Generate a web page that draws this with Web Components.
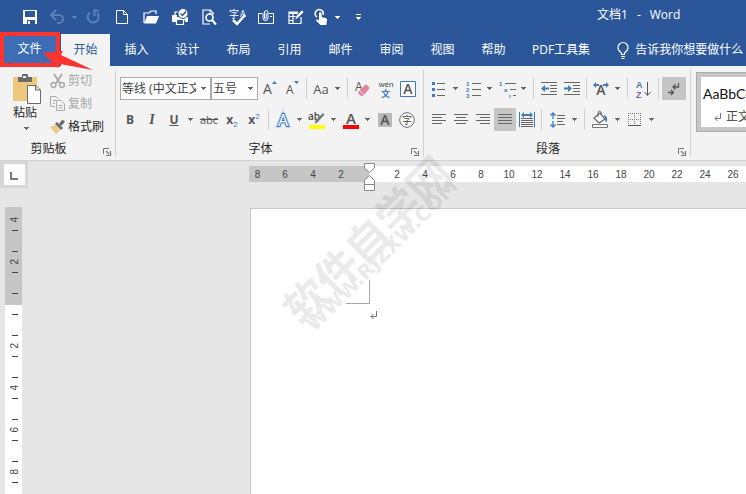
<!DOCTYPE html>
<html lang="zh-CN">
<head>
<meta charset="utf-8">
<title>文档1 - Word</title>
<style>
html, body { margin: 0; height: 100%; overflow: hidden; }
body { font: 12px/16px "Open Sans", "Noto Sans CJK SC", sans-serif; color: #262626; background: #e6e6e6; }
</style>
</head>
<body>
<word-app></word-app>
<script>
const A = 'font-family="Open Sans, Noto Sans CJK SC, sans-serif"';
const L = 'font-family="Liberation Sans, Arial, sans-serif"';
const ICONS = {
  caret: [5, 3, '<path d="M0 0h5v1H4v1H3v1H2V2H1V1H0z" fill="#666"/>'],
  caretLight: [5, 3, '<path d="M0 0h5v1H4v1H3v1H2V2H1V1H0z" fill="currentColor"/>'],
  save: [16, 16, '<path fill="#fff" fill-rule="evenodd" d="M1 1h14v14H1zM3 2v6h10V2zM5 11v4h1v-3h2v3h5v-4z"/>'],
  undo: [16, 16, '<path d="M3 6h7a4 4 0 0 1 0 8H8" fill="none" stroke="#5c7fb6" stroke-width="2"/><path d="M7 1L2 6l5 5" fill="none" stroke="#5c7fb6" stroke-width="2"/>'],
  redo: [16, 16, '<path d="M5 3.500A5.500 5.500 0 1 0 12 4" fill="none" stroke="#5c7fb6" stroke-width="2"/><path d="M8 1.500h6M9.500 2v5" fill="none" stroke="#5c7fb6" stroke-width="2"/>'],
  blank: [16, 16, '<path d="M2.500 1.500h7l4 4v9h-11zM9.500 1.500v4h4" fill="none" stroke="#fff"/>'],
  open: [16, 16, '<path d="M1 14V4h5l2-2h5v3" fill="none" stroke="#fff" stroke-width="1.200"/><path d="M1 14.500L4 7h12l-3 7.500z" fill="#fff"/>'],
  print: [18, 16, '<path d="M1 6h5v2h11v5h-3v-2H5v2H1z" fill="#fff"/><path d="M4 6V3h4M5.500 10.500h7v5h-7z" fill="#2b579a" stroke="#fff" stroke-width="1.200"/><circle cx="12" cy="4.500" r="5" fill="#fff" stroke="#2b579a"/><path d="M9.500 4.500l2 2 3.500-4" stroke="#2b579a" stroke-width="1.500" fill="none"/>'],
  preview: [16, 17, '<path d="M12 5V4L9.500 1H2v14h7" fill="none" stroke="#fff" stroke-width="1.200"/><path d="M9 1v4h4" fill="none" stroke="#fff"/><circle cx="8.500" cy="8.500" r="3.500" fill="none" stroke="#fff" stroke-width="1.700"/><path d="M11 11l4 4.500" stroke="#fff" stroke-width="2.200"/>'],
  spell: [18, 17, `<text x="0" y="9" font-size="10" fill="#fff" ${A}>字</text><text x="11" y="8" font-size="9" fill="#fff" ${A}>A</text><path d="M4 11l4 4 8-9" stroke="#fff" stroke-width="2.500" fill="none"/>`],
  mail: [17, 16, '<path d="M4 4.500H.5v10h15v-10H11M12 7.500h2" fill="none" stroke="#fff"/><path d="M5 4v5a2.500 2.500 0 0 0 5 0V3a1.800 1.800 0 0 0-3.500 0v6a.8.8 0 0 0 1.700 0V4" fill="none" stroke="#fff"/>'],
  edit: [16, 16, '<path d="M10 3H1v11.500h12V8M1 7.500h7M5 3v11M1 11.500h4" fill="none" stroke="#fff" stroke-width="1.200"/><path d="M1 3h9v2H1z" fill="#fff"/><path d="M7 11l1-4 6-6 2 2-6 6z" fill="#fff" stroke="#2b579a" stroke-width=".6"/>'],
  touch: [14, 17, '<path d="M3 8a4 4 0 1 1 6-2" fill="none" stroke="#fff" stroke-width="1.500"/><path d="M5 4.500a1.300 1.300 0 0 1 2.600 0V8l4.500 1.200q1 .4 1 1.800l-.8 5H6.500L2 11.500q0-1.500 1.500-1L5 11.500z" fill="#fff"/>'],
  customize: [5, 6, '<path d="M0 0h5v1H0zM0 3h5v1H4v1H3v1H2V5H1V4H0z" fill="#fff"/>'],
  bulb: [13, 17, '<path d="M4.500 12.500V11Q1 8.500 1 5.500a5 5 0 0 1 10 0Q11 8.500 7.500 11v1.500z" fill="none" stroke="#fff" stroke-width="1.200"/><path d="M4 14.500h4M4.500 16.500h3" stroke="#fff"/>'],
  paste: [28, 32, '<path d="M0 4h24v24H0z" fill="#edc87e"/><path d="M5 4h4V2q0-1 1-1h4q1 0 1 1v2h4v5H5z" fill="#6b6b6b"/><path d="M10 3h3v2h-3z" fill="#f3f3f3"/><path d="M14.500 12.500H23l4.500 4.500v13.500h-13zM22.500 12.500V17H27" fill="#fff" stroke="#6b6b6b"/>'],
  cut: [16, 16, '<path d="M4 1l6.500 10M12 1L5.500 11" stroke="#aaa" stroke-width="2"/><circle cx="3.500" cy="12" r="2.400" fill="none" stroke="#aaa" stroke-width="1.500"/><circle cx="12" cy="12" r="2.400" fill="none" stroke="#aaa" stroke-width="1.500"/>'],
  copy: [16, 16, '<path d="M5 10.500H.5v-10H6L8.500 3M3 4.500h3M3 7.500h2" fill="none" stroke="#aaa"/><path d="M6.500 4.500H11l3.500 3.500v6.500h-8zM8.500 9.500h4M8.500 12h4" fill="none" stroke="#aaa"/>'],
  brush: [16, 16, '<path d="M0 8l5-2 5 5-4 4z" fill="#edc87e"/><path d="M5 5l2-2 6 6-2 2z" fill="#6b6b6b"/><path d="M9 5l3-4 3 1-1 2-3 3z" fill="#6b6b6b"/>'],
  launch: [8, 8, '<path d="M.5 6V.5H6" fill="none" stroke="#777"/><path d="M3 3l3 3M7.500 3v4.500H3" fill="none" stroke="#777" stroke-width="1.200"/>'],
  grow: [16, 18, `<text x="1" y="14" font-size="14" fill="#555" ${A}>A</text><path d="M10 4h5l-2.500-3z" fill="#3f7cb8"/>`],
  shrink: [16, 18, `<text x="2" y="14" font-size="12" fill="#555" ${A}>A</text><path d="M10 1h5l-2.500 3z" fill="#3f7cb8"/>`],
  eraser: [16, 18, `<text x="0" y="11" font-size="12" fill="#555" ${A}>A</text><path d="M3 12l7-7q1-1 2 0l2 2q1 1 0 2l-6 7H6l-3-3z" fill="#e8819a"/><path d="M4 10l5 5" stroke="#f3f3f3"/>`],
  wen: [18, 20, `<text x="9" y="8" text-anchor="middle" font-size="8" fill="#444" ${L}>wén</text><text x="4" y="18" font-size="9" font-weight="700" fill="#3f7cb8" ${A}>文</text>`],
  boxA: [16, 16, `<path d="M.5.5h15v15H.5z" fill="#fff" stroke="#3f7cb8"/><text x="8" y="13" text-anchor="middle" font-size="14" font-weight="600" fill="#555" ${A}>A</text>`],
  glowA: [16, 16, `<text x="8" y="14" text-anchor="middle" font-size="16" fill="#fff" stroke="#c9dcf0" stroke-width="4" ${A}>A</text><text x="8" y="14" text-anchor="middle" font-size="16" fill="#fff" stroke="#3f7cb8" stroke-width="2" ${A}>A</text><text x="8" y="14" text-anchor="middle" font-size="16" fill="#fff" ${A}>A</text>`],
  highlight: [18, 18, `<text x="0" y="9" font-size="10" font-weight="600" fill="#444" ${A}>ab</text><path d="M15 2l1.500 1.500-7 8-3 1 1-3z" fill="#777"/><path d="M1 14h16v4H1z" fill="#ff0"/>`],
  fontColor: [16, 18, `<text x="8" y="13" text-anchor="middle" font-size="15" font-weight="600" fill="#555" ${A}>A</text><path d="M0 14h16v4H0z" fill="red"/>`],
  shadeA: [14, 14, `<path d="M0 0h14v14H0z" fill="#b9b9b9"/><text x="7" y="12" text-anchor="middle" font-size="14" font-weight="600" fill="#555" ${A}>A</text>`],
  circleZi: [16, 16, `<circle cx="8" cy="8" r="7.300" fill="#fff" stroke="#666"/><text x="8" y="12" text-anchor="middle" font-size="10" fill="#444" ${A}>字</text>`],
  bullets: [14, 16, '<path d="M5 2.500h8M5 8.500h8M5 14.500h8" stroke="#666"/><path d="M0 1h3v3H0zM0 7h3v3H0zM0 13h3v3H0z" fill="#3f7cb8"/>'],
  numbers: [15, 17, `<path d="M6 3.500h9M6 9.500h9M6 15.500h9" stroke="#666"/><g font-size="6" font-weight="700" fill="#3f7cb8" ${L}><text x="0" y="6">1</text><text x="0" y="12">2</text><text x="0" y="18">3</text></g>`],
  multi: [17, 17, `<path d="M6 3.500h11M11 9.500h6M14 15.500h3" stroke="#666"/><g font-size="6" font-weight="700" fill="#3f7cb8" ${L}><text x="0" y="6">1</text><text x="5" y="12">a</text><text x="10" y="18">i</text></g>`],
  outdent: [16, 14, '<path d="M0 .5h16M9 3.500h7M9 6.500h7M9 9.500h7M0 12.500h16" stroke="#666"/><path d="M0 6.500L4 3v2.500h4v2H4V10z" fill="#3f7cb8"/>'],
  indent: [16, 14, '<path d="M0 .5h16M9 3.500h7M9 6.500h7M9 9.500h7M0 12.500h16" stroke="#666"/><path d="M8 6.500L4 3v2.500H0v2h4V10z" fill="#3f7cb8"/>'],
  scaleA: [16, 16, `<text x="8" y="14" text-anchor="middle" font-size="14" font-weight="600" fill="#555" ${A}>A</text><path d="M0 4l3-3v2h3v2H3v2zM16 4l-3-3v2h-3v2h3v2z" fill="#3f7cb8"/>`],
  sort: [15, 18, `<text x="0" y="8" font-size="9" font-weight="700" fill="#3f7cb8" ${L}>A</text><text x="0" y="18" font-size="9" font-weight="700" fill="#9155b0" ${L}>Z</text><path d="M11.500 2v13M8.500 12l3 3.500 3-3.500" fill="none" stroke="#555"/>`],
  marks: [12, 14, '<path d="M10.500 1v4H5M7.500 2.500L5 5l2.500 2.500M0 10.500h5M3 8l2.500 2.500L3 13" fill="none" stroke="#555" stroke-width="1.300"/>'],
  left: [14, 11, '<path d="M0 .5h14M0 3.500h10M0 6.500h14M0 9.500h10" stroke="#666"/>'],
  center: [14, 11, '<path d="M0 .5h14M2 3.500h10M0 6.500h14M2 9.500h10" stroke="#666"/>'],
  right: [14, 11, '<path d="M0 .5h14M4 3.500h10M0 6.500h14M4 9.500h10" stroke="#666"/>'],
  justify: [14, 11, '<path d="M0 .5h14M0 3.500h14M0 6.500h14M0 9.500h14" stroke="#666"/>'],
  distribute: [16, 16, '<path d="M.5 0v15M15.500 0v15" stroke="#3f7cb8"/><path d="M2 3l3-3v2h6V0l3 3-3 3V4H5v2z" fill="#3f7cb8"/><path d="M2 6.500h12M2 8.500h12M2 10.500h12M2 12.500h12M2 14.500h12" stroke="#666"/>'],
  spacing: [15, 16, '<path d="M7 3.500h8M7 6.500h8M7 9.500h6M7 12.500h8" stroke="#666"/><path d="M3 7V1M.5 3.500L3 1l2.500 2.500M3 9v6M.5 12.500L3 15l2.500-2.500" fill="none" stroke="#3f7cb8" stroke-width="1.300"/>'],
  bucket: [17, 17, '<path d="M2 7l6-5 5 6-6 4z" fill="#fff" stroke="#666" stroke-width="1.200"/><path d="M6 6V1q1.500-1.500 3 0v3" fill="none" stroke="#666"/><path d="M12 4q4 1 3 7-2 0-2-3z" fill="#3f7cb8"/><path d="M.5 13.500h15v3H.5z" fill="#fff" stroke="#777"/>'],
  borders: [14, 14, '<path d="M.5 0v13M6.500 0v13M12.500 0v13M0 .5h13M0 6.500h13" stroke="#777" stroke-dasharray="1 1"/><path d="M0 12.500h13" stroke="#555"/>'],
  tabstop: [9, 9, '<path d="M1 0v7h7" fill="none" stroke="#777" stroke-width="2"/>'],
  enter: [8, 8, '<path d="M6.500 0v5.500H1M3.500 3L1 5.500 3.500 8" fill="none" stroke="#777"/>'],
  indentMarks: [12, 28, '<path d="M.5.5h10v4.500l-5 4.500-5-4.500zM.5 27.500v-10l5-5 5 5v10zM.5 21.500h10" fill="#fff" stroke="#888"/>'],
  arrow: [50, 20, '<path d="M0 2L20 0 18 4 50 19 17 13 15 17z" fill="#fb3430"/>']
};
function define(name, html, after) {
  const t = document.createElement('template');
  t.innerHTML = html;
  customElements.define(name, class extends HTMLElement {
    connectedCallback() {
      if (this.shadowRoot) return;
      const root = this.attachShadow({ mode: 'open' });
      root.append(t.content.cloneNode(true));
      if (after) after(this, root);
    }
  });
}

define('w-icon', '<style>:host{display:block;flex:none}svg{display:block;overflow:visible}</style>', (el, root) => {
  const [w, h, body] = ICONS[el.getAttribute('name')];
  root.innerHTML += `<svg width="${w}" height="${h}" viewBox="0 0 ${w} ${h}" aria-hidden="true">${body}</svg>`;
});

/* Tool button; its width comes from --w */
define('w-tool', `<style>
:host{display:block;flex:none;width:var(--w,22px)}
button{box-sizing:border-box;display:flex;align-items:center;justify-content:center;width:100%;height:23px;margin:0;padding:0;border:0;background:none;font:inherit;color:#555}
:host([wide]) button{width:24px}:host([wide]){width:24px}
:host([pressed]) button{background:#c6c6c6}
</style><button type="button"><slot></slot></button>`, (el, root) => {
  root.querySelector('button').setAttribute('aria-label', el.getAttribute('label') || el.textContent.trim());
  const i = el.getAttribute('icon');
  if (i) root.querySelector('button').innerHTML = `<w-icon name="${i}"></w-icon>`;
});
define('w-drop', `<style>:host{display:block;flex:none;width:12px}
button{display:flex;align-items:center;width:100%;height:23px;padding:0 0 0 3px;border:0;background:none}</style>
<button type="button" aria-label="更多选项"><w-icon name="caret"></w-icon></button>`);
define('w-sep', `<style>:host{display:flex;flex:none;width:7px;height:21px;justify-content:center}i{width:1px;background:#d0d0d0}</style><i></i>`);
define('w-row', `<style>:host{display:flex;align-items:center;height:23px}</style><slot></slot>`);

define('w-combo', `<style>
:host{display:grid;flex:none;align-items:center}
select{grid-area:1/1;box-sizing:border-box;appearance:none;width:100%;height:23px;margin:0;padding:0 14px 0 1px;border:1px solid #ababab;border-radius:0;background:#fff;font:inherit;color:#444;overflow:hidden;text-overflow:clip}
w-icon{grid-area:1/1;justify-self:end;margin-right:5px;pointer-events:none}
</style><select><option></option></select><w-icon name="caret"></w-icon>`, (el, root) => {
  root.querySelector('option').textContent = el.getAttribute('value');
  root.querySelector('select').setAttribute('aria-label', el.getAttribute('label'));
});

define('w-group', `<style>
:host{display:flex;flex:none;flex-direction:column;box-sizing:border-box;height:87px;border-right:1px solid #d2d2d2}
.body{flex:1}
footer{display:grid;grid-template-columns:1fr 14px;align-items:center;height:16px;padding-right:4px}
footer span{text-align:center}
button{justify-self:end;padding:0;border:0;background:none;margin-top:6px}
</style><div class="body"><slot></slot></div><footer><span></span><button type="button" aria-label="对话框启动器"><w-icon name="launch"></w-icon></button></footer>`, (el, root) => {
  root.querySelector('span').textContent = el.getAttribute('label');
});

define('w-qat', `<style>
:host{display:flex;align-items:center;height:100%;padding-left:15px;color:#fff}
w-tool{--w:29px}.n{--w:26px}.t{--w:22px}.d{--w:10px}.u{--w:8px}.c{--w:32px}.dim{color:#5c7fb6}
</style>
<w-tool icon="save" label="保存"></w-tool><w-tool class="n" icon="undo" label="撤消"></w-tool><w-tool class="u" label="撤消列表"><w-icon class="dim" name="caretLight"></w-icon></w-tool><w-tool icon="redo" label="恢复"></w-tool><w-tool icon="blank" label="新建"></w-tool><w-tool icon="open" label="打开"></w-tool><w-tool icon="print" label="快速打印"></w-tool><w-tool icon="preview" label="打印预览"></w-tool><w-tool icon="spell" label="拼写和语法"></w-tool><w-tool icon="mail" label="电子邮件"></w-tool><w-tool icon="edit" label="绘制表格"></w-tool><w-tool class="t" icon="touch" label="触摸模式"></w-tool><w-tool class="d" label="模式列表"><w-icon style="color:#fff" name="caretLight"></w-icon></w-tool><w-tool class="c" icon="customize" label="自定义快速访问工具栏"></w-tool>`);

define('w-titlebar', `<style>
:host{display:flex;align-items:center;height:34px;background:#2b579a;color:#fff}
h1{display:flex;gap:9px;margin:0 0 4px 223px;font:inherit;white-space:nowrap}
</style><w-qat></w-qat><h1><span>文档1</span><span>-</span><span>Word</span></h1>`);

define('w-tab', `<style>
:host{display:block;flex:none}
button{min-width:49px;height:32px;padding:0 12px;border:0;background:none;color:#fff;font:inherit;white-space:nowrap}
:host([file]) button{min-width:59px;padding-bottom:2px;background:#3e6db5}
:host([selected]) button{background:#f3f3f3;color:#2b579a}
</style><button type="button" role="tab"><slot></slot></button>`);
define('w-tabs', `<style>
:host{display:flex;align-items:center;gap:2px;height:32px;background:#2b579a;color:#fff}
.tell{display:flex;align-items:center;gap:5px;margin-left:13px;padding:0;border:0;background:none;color:#fff;font:inherit;white-space:nowrap}
</style><w-tab file>文件</w-tab><w-tab selected>开始</w-tab><w-tab>插入</w-tab><w-tab>设计</w-tab><w-tab>布局</w-tab><w-tab>引用</w-tab><w-tab>邮件</w-tab><w-tab>审阅</w-tab><w-tab>视图</w-tab><w-tab>帮助</w-tab><w-tab>PDF工具集</w-tab>
<button class="tell" type="button"><w-icon name="bulb"></w-icon>告诉我你想要做什么</button>`);

define('w-clipboard', `<style>
:host{display:flex;gap:9px;padding:3px 10px 0 13px}
button{padding:0;border:0;background:none;font:inherit;color:#262626}
.big{display:flex;flex-direction:column;align-items:flex-start}
.big w-icon + span{margin-bottom:6px}
.big .caret{margin-left:11px}
.list{display:flex;flex-direction:column;margin-top:-4px}
.list button{display:flex;align-items:center;gap:2px;height:23px}
.list :disabled{color:#a6a6a6}
</style><button class="big" type="button"><w-icon name="paste"></w-icon><span>粘贴</span><w-icon class="caret" name="caret"></w-icon></button>
<div class="list"><button type="button" disabled><w-icon name="cut"></w-icon>剪切</button><button type="button" disabled><w-icon name="copy"></w-icon>复制</button><button type="button"><w-icon name="brush"></w-icon>格式刷</button></div>`);

define('w-fonttools', `<style>
:host{display:flex;flex-direction:column;gap:8px;padding:7px 4px 0}
.face{width:91px}.size{width:47px;margin-right:1px}
.row2{margin-left:-1px}
b,u,.x{font-size:12px;font-weight:700}i{font-family:"Liberation Serif",serif;font-weight:700;font-size:14px}
s{font-size:11px}sup,sub{font:8px/0 "Liberation Sans",Arial,sans-serif;color:#3f7cb8}.aa{font-size:13px}
</style>
<w-row><w-combo class="face" label="字体" value="等线 (中文正文)"></w-combo><w-combo class="size" label="字号" value="五号"></w-combo><w-tool icon="grow" label="增大字号"></w-tool><w-tool icon="shrink" label="减小字号"></w-tool><w-sep></w-sep><w-tool label="更改大小写"><span class="aa">Aa</span></w-tool><w-drop></w-drop><w-sep></w-sep><w-tool wide icon="eraser" label="清除格式"></w-tool><w-tool icon="wen" label="拼音指南"></w-tool><w-tool icon="boxA" label="字符边框"></w-tool></w-row>
<w-row class="row2"><w-tool label="加粗"><b>B</b></w-tool><w-tool label="倾斜"><i>I</i></w-tool><w-tool label="下划线"><u>U</u></w-tool><w-drop></w-drop><w-tool wide label="删除线"><s>abc</s></w-tool><w-tool label="下标"><span class="x">x<sub>2</sub></span></w-tool><w-tool label="上标"><span class="x">x<sup>2</sup></span></w-tool><w-sep></w-sep><w-tool icon="glowA" label="文本效果"></w-tool><w-drop></w-drop><w-tool icon="highlight" label="突出显示"></w-tool><w-drop></w-drop><w-tool icon="fontColor" label="字体颜色"></w-tool><w-drop></w-drop><w-tool icon="shadeA" label="字符底纹"></w-tool><w-tool icon="circleZi" label="带圈字符"></w-tool></w-row>`);

define('w-paratools', `<style>:host{display:flex;flex-direction:column;gap:8px;padding:7px 4px 0}</style>
<w-row><w-tool icon="bullets" label="项目符号"></w-tool><w-drop></w-drop><w-tool icon="numbers" label="编号"></w-tool><w-drop></w-drop><w-tool icon="multi" label="多级列表"></w-tool><w-drop></w-drop><w-sep></w-sep><w-tool wide icon="outdent" label="减少缩进量"></w-tool><w-tool icon="indent" label="增加缩进量"></w-tool><w-sep></w-sep><w-tool icon="scaleA" label="中文版式"></w-tool><w-drop></w-drop><w-sep></w-sep><w-tool wide icon="sort" label="排序"></w-tool><w-sep></w-sep><w-tool wide pressed icon="marks" label="显示编辑标记"></w-tool></w-row>
<w-row><w-tool icon="left" label="左对齐"></w-tool><w-tool icon="center" label="居中"></w-tool><w-tool icon="right" label="右对齐"></w-tool><w-tool pressed icon="justify" label="两端对齐"></w-tool><w-tool icon="distribute" label="分散对齐"></w-tool><w-sep></w-sep><w-tool wide icon="spacing" label="行距"></w-tool><w-drop></w-drop><w-sep></w-sep><w-tool wide icon="bucket" label="底纹"></w-tool><w-drop></w-drop><w-tool icon="borders" label="边框"></w-tool><w-drop></w-drop></w-row>`);

define('w-styles', `<style>
:host{display:block;flex:1;min-width:0;overflow:hidden;padding:2px 0 0 5px}
button{box-sizing:border-box;display:flex;width:86px;height:60px;padding:4px;border:1px solid #ababab;background:#c6c6c6;font:inherit;color:#444}
.card{display:flex;flex:1;flex-direction:column;gap:6px;height:50px;box-sizing:border-box;padding:8px 0 0 2px;background:#fff;text-align:left}
.sample{font:14px/18px Lato,"Open Sans",sans-serif;color:#111}
.name{display:flex;align-items:center;gap:4px;padding-left:11px}
</style><button type="button"><span class="card"><span class="sample">AaBbCcDd</span><span class="name"><w-icon name="enter"></w-icon>正文</span></span></button>`);

define('w-ribbon', `<style>
:host{display:flex;height:95px;box-sizing:border-box;padding-top:4px;background:#f3f3f3;border-bottom:1px solid #d2d2d2;overflow:hidden}
.clip{width:116px}.font{width:308px}.para{width:267px}
</style><w-group class="clip" label="剪贴板"><w-clipboard></w-clipboard></w-group><w-group class="font" label="字体"><w-fonttools></w-fonttools></w-group><w-group class="para" label="段落"><w-paratools></w-paratools></w-group><w-styles></w-styles>`);

define('w-hruler', `<style>
:host{display:grid;grid-template:16px/120px 1fr;height:16px;background:#fff;font:10px/18px "Liberation Sans",Arial,sans-serif;color:#444}
.neg,.pos{display:flex;overflow:hidden}
.neg{grid-area:1/1;background:#c6c6c6;padding-left:1px}
.pos{grid-area:1/2;padding-left:14px}
span{flex:none;width:28px;text-align:center}
.neg span:first-child{width:15px;margin-right:6px}
.mark{grid-area:1/2;justify-self:start;margin:-3px 0 0 -5px}
</style><div class="neg"></div><div class="pos"></div><w-icon class="mark" name="indentMarks"></w-icon>`, (el, root) => {
  root.querySelector('.neg').innerHTML = [8, 6, 4, 2].map(n => `<span>${n}</span>`).join('');
  root.querySelector('.pos').innerHTML = Array.from({ length: 20 }, (_, i) => `<span>${(i + 1) * 2}</span>`).join('');
});

define('w-vruler', `<style>
:host{display:flex;flex-direction:column;width:17px;overflow:hidden;background:linear-gradient(#c6c6c6 98px,#fff 98px);font:10px/10px "Liberation Sans",Arial,sans-serif;color:#444}
div{box-sizing:border-box;flex:none;display:flex;flex-direction:column;align-items:center;justify-content:space-between;height:42px;padding:10px 0;margin-left:2px}
div:first-of-type{height:34px}
i{width:6px;height:1px;background:#444}
span{writing-mode:vertical-rl;transform:rotate(180deg);line-height:12px}
</style>`, (el, root) => {
  root.innerHTML += [4, 2, 0, 2, 4, 6, 8, 10, 12, 14].map((n, k) => `<div>${k ? '<i></i>' : ''}${n ? `<span>${n}</span>` : ''}<i></i></div>`).join('');
});

define('w-page', `<style>
:host{display:block;box-sizing:border-box;padding:71px 0 0 95px;background:#fff;border:1px solid #c6c6c6;border-width:1px 0 0 1px}
.corner{box-sizing:border-box;width:24px;height:24px;border:1px solid #aaa;border-width:0 1px 1px 0}
w-icon{margin:7px 0 0 24px}
</style><div class="corner"></div><w-icon name="enter"></w-icon>`);

define('w-workspace', `<style>
:host{display:grid;grid-template-columns:28px 1fr;min-height:0;overflow:hidden;background:#e6e6e6}
.side{display:flex;flex-direction:column;min-height:0}
.sel{box-sizing:border-box;height:27px;padding:3px 3px 3px 4px;background:#d6d6d6}
.sel button{display:flex;align-items:center;justify-content:center;width:100%;height:100%;padding:4px 0 0;border:0;background:#fcfcfc}
w-vruler{flex:1;margin:19px 0 0 5px}
.main{display:flex;flex-direction:column;min-width:0;min-height:0;padding:5px 0 0 221px}
w-page{flex:1;margin:26px 0 0 1px}
</style><div class="side"><div class="sel"><button type="button" aria-label="制表符"><w-icon name="tabstop"></w-icon></button></div><w-vruler></w-vruler></div>
<div class="main"><w-hruler></w-hruler><w-page></w-page></div>`);

define('w-callout', `<style>
:host{position:absolute;left:0;top:32px;pointer-events:none}
.box{box-sizing:border-box;width:60px;height:35px;border:4px solid #fb3430}
w-icon{position:absolute;left:43px;top:19px}
</style><div class="box"></div><w-icon name="arrow"></w-icon>`);
define('w-watermark', `<style>
:host{position:absolute;left:262px;top:222px;width:220px;height:46px;display:flex;flex-direction:column;align-items:center;transform:rotate(-45deg);pointer-events:none;color:#000;opacity:.08;white-space:nowrap}
.cn{font:700 43px/28px "Noto Sans CJK SC",sans-serif}
.url{font:700 20px/18px "DejaVu Sans",sans-serif}
</style><span class="cn">软件自学网</span><span class="url">WWW.RJZXW.COM</span>`);

define('word-app', `<style>
:host{position:relative;display:grid;grid-template-rows:auto auto auto 1fr;grid-template-columns:minmax(0,1fr);height:100vh;overflow:hidden}
</style><w-titlebar></w-titlebar><w-tabs role="tablist"></w-tabs><w-ribbon></w-ribbon><w-workspace></w-workspace><w-watermark></w-watermark><w-callout></w-callout>`);
</script>
</body>
</html>
